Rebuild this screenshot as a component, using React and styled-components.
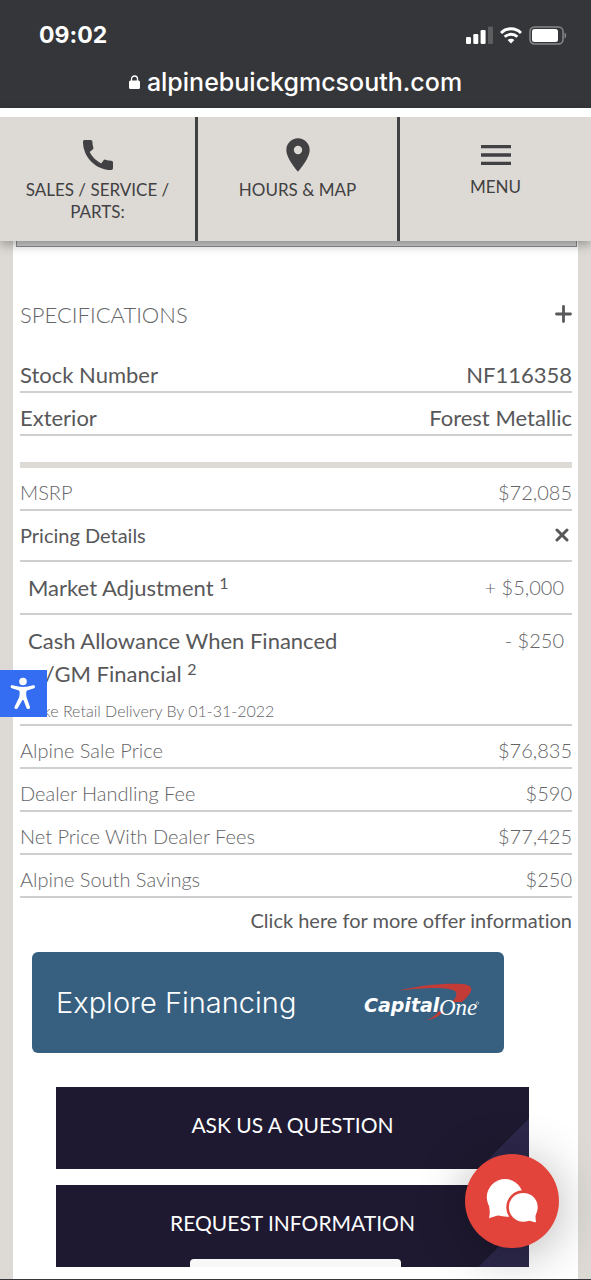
import React, { useState } from 'react';
import styled, { createGlobalStyle } from 'styled-components';
import { MdCall, MdLocationOn, MdMenu } from 'react-icons/md';

const GlobalStyle = createGlobalStyle`
    :root {
        --chrome: #353639;
        --sand: #dddad5;
        --ink: #414042;
        --text: #58585a;
        --text-lite: #656567;
        --line: #cfcfcf;
        --navy: #1e1930;
        --red: #e2443b;
    }

    * {
        box-sizing: border-box;
    }

    body {
        margin: 0;
        background-color: var(--sand);
        font-family: Lato, "Liberation Sans", sans-serif;
        font-variant-ligatures: none;
        color: var(--text);
    }

    button {
        border: none;
        padding: 0;
        background: transparent;
        font-family: inherit;
        color: inherit;
        cursor: pointer;
    }

    a {
        color: inherit;
        text-decoration: none;
    }
`;

const Page = styled.div`
    min-height: 100vh;
    display: flex;
    flex-direction: column;
    border-bottom: 1px solid var(--chrome);
`;

const Browser = styled.header`
    height: 108px;
    background-color: var(--chrome);
    color: #fff;
    font-family: Inter, "Liberation Sans", sans-serif;
`;

const StatusBar = styled.div`
    display: flex;
    justify-content: space-between;
    align-items: center;
    padding: 20px 24px 0 39px;
    height: 50px;
    font-size: 23px;
    font-weight: 700;
`;

const StatusIcons = styled.div`
    display: flex;
    align-items: center;
    gap: 7px;

    svg {
        display: block;
    }
`;

const Address = styled.div`
    display: flex;
    justify-content: center;
    align-items: center;
    gap: 7px;
    padding-top: 16px;
    font-size: 25px;
    line-height: 32px;
    font-weight: 500;
`;

const Nav = styled.nav`
    position: relative;
    z-index: 2;
    display: grid;
    grid-template-columns: 198fr 202fr 191fr;
    height: 133px;
    border-top: 9px solid #fff;
    background-color: var(--sand);
    box-shadow: 0 4px 10px rgba(0, 0, 0, 0.3);
`;

const NavItem = styled.a`
    display: flex;
    flex-direction: column;
    align-items: center;
    gap: ${props => props.$tight ? '1px' : '4px'};
    padding: 18px 16px 0;
    color: var(--ink);
    font-size: 17px;
    line-height: 22px;
    text-align: center;

    &:not(:last-child) {
        border-right: 3px solid var(--ink);
    }

    svg {
        height: 40px;
        width: 40px;
        flex: none;
    }
`;

const Card = styled.main`
    flex: 1;
    margin: 0 13px;
    padding: 0 6px 12px 7px;
    background-color: #fff;
`;

const PhotoEdge = styled.div`
    height: 6px;
    margin: 0 -5px 0 -4px;
    border: 1px solid #8c8c8c;
    border-top: none;
    background-color: #cfcfcf;
`;

const Heading = styled.span`
    font-size: 22px;
    font-weight: 300;
    color: var(--text-lite);
`;

const Toggle = styled.button`
    display: flex;
    justify-content: space-between;
    align-items: center;
    width: 100%;
    text-align: left;
`;

const SpecToggle = styled(Toggle)`
    height: 40px;
    margin: 47px 0 16px;
`;

const PricingToggle = styled(Toggle)`
    height: 51px;
    padding: 0 3px 2px 0;
    border-bottom: 2px solid var(--line);
    font-size: 20px;
`;

const List = styled.dl`
    margin: 0;

    dd {
        margin: 0;
    }
`;

const Row = styled.div`
    display: flex;
    justify-content: space-between;
    padding-top: ${props => props.$lite ? '8px' : '9px'};
    height: 43px;
    border-bottom: 2px solid var(--line);
    font-size: ${props => props.$lite ? '20px' : '22px'};
    line-height: 32px;
    font-weight: ${props => props.$lite ? 300 : 400};
    color: ${props => props.$lite ? 'var(--text-lite)' : 'var(--text)'};
`;

const Detail = styled.div`
    display: flex;
    justify-content: space-between;
    align-items: flex-start;
    padding: 9px 8px 0;
    border-bottom: 2px solid var(--line);
    font-size: 22px;
    line-height: 33px;

    dt {
        max-width: 320px;
        padding-bottom: 9px;
    }

    dd {
        font-size: 20px;
        font-weight: 300;
        color: var(--text-lite);
    }

    sup {
        font-size: 16px;
        line-height: 0;
        vertical-align: 7px;
    }

    small {
        display: block;
        margin-top: 8px;
        margin-bottom: -9px;
        font-size: 16px;
        line-height: 26px;
        font-weight: 300;
        color: var(--text-lite);
    }
`;

const Divider = styled.hr`
    height: 6px;
    margin: 26px 0 0;
    border: none;
    background-color: var(--sand);
`;

const OfferLink = styled.a`
    display: block;
    padding: 6px 0 16px;
    font-size: 20px;
    line-height: 32px;
    text-align: right;
`;

const Financing = styled.a`
    display: flex;
    justify-content: space-between;
    align-items: center;
    height: 101px;
    margin: 0 68px 34px 12px;
    padding: 0 24px;
    border-radius: 6px;
    background-color: #375f80;
    color: #fff;
    font-family: Inter, "Liberation Sans", sans-serif;
    font-size: 29px;
    font-weight: 300;
`;

const Actions = styled.div`
    display: flex;
    flex-direction: column;
    gap: 16px;
    margin: 0 43px 0 36px;
`;

const Action = styled.button`
    height: 82px;
    padding-bottom: 8px;
    background: linear-gradient(135deg, transparent 50%, #2d284b 50%) right bottom / 50px 50px no-repeat var(--navy);
    font-size: 21px;
    color: #fff;
`;

const AccessButton = styled.button`
    position: fixed;
    z-index: 3;
    left: 0;
    top: 670px;
    height: 47px;
    width: 47px;
    background-color: #346df1;

    svg {
        display: block;
    }
`;

const ChatButton = styled.button`
    position: fixed;
    z-index: 3;
    right: 32px;
    bottom: 32px;
    height: 94px;
    width: 94px;
    border-radius: 50%;
    background-color: var(--red);
    box-shadow: 0 6px 50px rgba(0, 0, 0, 0.3);

    svg {
        display: block;
    }
`;

const HomeBar = styled.div`
    position: fixed;
    z-index: 2;
    left: 50%;
    bottom: 13px;
    height: 8px;
    width: 211px;
    margin-left: -106px;
    border-radius: 4px 4px 0 0;
    background-color: #f8f8f8;
`;

const Signal = () => (
    <svg width="27" height="18" viewBox="0 0 27 18" fill="#fff">
        <rect x="0" y="11" width="5" height="7" rx="1.2" />
        <rect x="7.300" y="8" width="5" height="10" rx="1.2" />
        <rect x="14.600" y="4" width="5" height="14" rx="1.2" />
        <rect x="22" y="0.500" width="5" height="17.500" rx="1.2" opacity="0.2" />
    </svg>
);

const Wifi = () => (
    <svg width="22" height="17" viewBox="0 0 22 17" fill="none" stroke="#fff">
        <path d="M1 6C6.500 .4 15.500 .4 21 6" strokeWidth="3" />
        <path d="M4.600 9.800C8.200 6.400 13.800 6.400 17.400 9.800" strokeWidth="2.800" />
        <path d="M7.600 13C9.500 11.200 12.500 11.200 14.400 13L11 16.500Z" fill="#fff" stroke="none" />
    </svg>
);

const Battery = () => (
    <svg width="38" height="19" viewBox="0 0 38 19">
        <rect x="1" y="1" width="33" height="17" rx="4.500" fill="none" stroke="#87888a" strokeWidth="1.500" />
        <rect x="3" y="3" width="26" height="13" rx="2.500" fill="#fff" />
        <path d="M35.500 6.500C37.700 7.500 37.700 11.500 35.500 12.500Z" fill="#87888a" />
    </svg>
);

const Lock = () => (
    <svg width="11" height="14" viewBox="0 0 11 14">
        <rect x="0" y="5.500" width="11" height="8.500" rx="1.500" fill="#fff" />
        <path d="M2.500 6V4C2.500 0 8.500 0 8.500 4V6" fill="none" stroke="#fff" strokeWidth="1.300" />
    </svg>
);

const Plus = () => (
    <svg width="17" height="18" viewBox="0 0 17 18" stroke="#58585a" strokeWidth="2.800" strokeLinecap="round">
        <path d="M8.500 1.500V16.500M1.500 9H15.500" />
    </svg>
);

const Cross = () => (
    <svg width="14" height="14" viewBox="0 0 14 14" stroke="#58585a" strokeWidth="3" strokeLinecap="round">
        <path d="M2 2L12 12M12 2L2 12" />
    </svg>
);

const CapitalOne = () => (
    <svg width="118" height="44" viewBox="0 0 118 44">
        <path d="M37 9.500C55 5 78 2.300 96 2.800C107 3 110.500 5.500 109 10C107.500 14 104 17 100 21H90C94 17 96 13 93 10C87 5.500 62 6.500 37 9.500Z" fill="#c23b36" />
        <path d="M64 39.500C70 37 75 33.500 77 30L81 31C77 35.500 71 38.500 64 39.500Z" fill="#c23b36" />
        <text x="2" y="31" fill="#fff" fontFamily="DejaVu Sans" fontSize="19" fontWeight="700" fontStyle="italic">Capital</text>
        <text x="77" y="34" fill="#fff" fontFamily="Liberation Serif" fontSize="23" fontStyle="italic">One</text>
        <circle cx="115.500" cy="22" r="1.300" fill="none" stroke="#d7e0e8" strokeWidth="0.600" />
    </svg>
);

const Person = () => (
    <svg width="47" height="47" viewBox="0 0 47 47" fill="#fff">
        <circle cx="23" cy="11.500" r="3.800" />
        <path d="M11 15.500C10 17 11 18 12.500 18.500L19 20.500C20 21.500 19.800 24 19.200 27L14.500 37C14 39 16.800 40 17.800 38L22.500 30H23.500L26.500 38C27.500 40 30.500 39 30 37L26.500 27C26 24 26 21.500 27 20.500L33.500 18.500C35 18 35.500 16.500 34.500 15.500C33.500 15 31 16 28 16.500C25 17 21 17 18 16.500C15 16 12 15 11 15.500Z" />
    </svg>
);

const Bubbles = () => (
    <svg width="94" height="94" viewBox="0 0 94 94" fill="#fff">
        <circle cx="40" cy="43.300" r="18.200" />
        <path d="M24 64.300C25 60 25 57 24 52L45 60V62.500C41 63 37 62.500 34 61.500C31 61.500 28 63 24 64.300Z" />
        <circle cx="58.300" cy="53.300" r="17" fill="#e2443b" />
        <circle cx="58.300" cy="53.300" r="14.400" />
        <path d="M71.500 57C70 61 70.500 64 71 68.300C68 68 65 66.500 60 66Z" />
    </svg>
);

const specs = [
    { label: "Stock Number", value: "NF116358" },
    { label: "Exterior", value: "Forest Metallic" },
];

const totals = [
    { label: "Alpine Sale Price", value: "$76,835" },
    { label: "Dealer Handling Fee", value: "$590" },
    { label: "Net Price With Dealer Fees", value: "$77,425" },
    { label: "Alpine South Savings", value: "$250" },
];

const Rows = ({ items, lite }) => (
    <List>
        {items.map(({ label, value }) => (
            <Row key={label} $lite={lite}>
                <dt>{label}</dt>
                <dd>{value}</dd>
            </Row>
        ))}
    </List>
);

const App = () => {
    const [open, setOpen] = useState(true);

    const toggleOpen = () => setOpen(!open);

    return (
        <Page>
            <GlobalStyle />
            <Browser>
                <StatusBar>
                    <span>09:02</span>
                    <StatusIcons>
                        <Signal />
                        <Wifi />
                        <Battery />
                    </StatusIcons>
                </StatusBar>
                <Address><Lock />alpinebuickgmcsouth.com</Address>
            </Browser>
            <Nav>
                <NavItem href="#contact"><MdCall />SALES / SERVICE / PARTS:</NavItem>
                <NavItem href="#hours"><MdLocationOn />HOURS &amp; MAP</NavItem>
                <NavItem as="button" $tight><MdMenu />MENU</NavItem>
            </Nav>
            <Card>
                <PhotoEdge />
                <SpecToggle>
                    <Heading>SPECIFICATIONS</Heading>
                    <Plus />
                </SpecToggle>
                <Rows items={specs} />
                <Divider />
                <Rows items={[{ label: "MSRP", value: "$72,085" }]} lite />
                <PricingToggle onClick={toggleOpen} aria-expanded={open}>
                    Pricing Details
                    <Cross />
                </PricingToggle>
                {open ?
                <List>
                    <Detail>
                        <dt>Market Adjustment <sup>1</sup></dt>
                        <dd>+ $5,000</dd>
                    </Detail>
                    <Detail>
                        <dt>
                            Cash Allowance When Financed w/GM Financial <sup>2</sup>
                            <small>Take Retail Delivery By 01-31-2022</small>
                        </dt>
                        <dd>- $250</dd>
                    </Detail>
                </List>
                :null}
                <Rows items={totals} lite />
                <OfferLink href="#offer">Click here for more offer information</OfferLink>
                <Financing href="#financing">
                    Explore Financing
                    <CapitalOne />
                </Financing>
                <Actions>
                    <Action>ASK US A QUESTION</Action>
                    <Action>REQUEST INFORMATION</Action>
                </Actions>
            </Card>
            <AccessButton aria-label="Accessibility"><Person /></AccessButton>
            <ChatButton aria-label="Chat"><Bubbles /></ChatButton>
            <HomeBar />
        </Page>
    );
}

export default App;
